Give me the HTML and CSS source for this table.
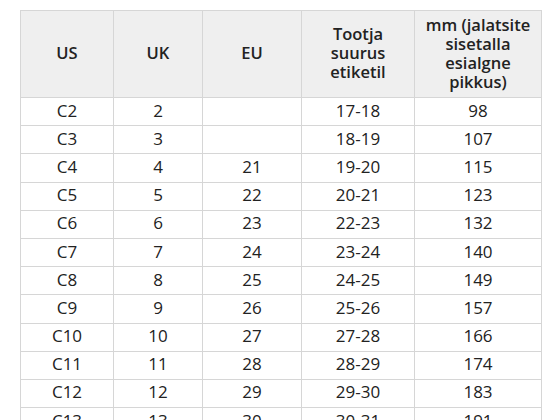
FILE: index.html
```html
<!DOCTYPE html>
<html>
<head>
<meta charset="utf-8">
<link rel="stylesheet" href="styles.css">
</head>
<body>
<table class="sizes">
  <colgroup>
    <col class="c1"><col class="c2"><col class="c3"><col class="c4"><col class="c5">
  </colgroup>
  <thead>
    <tr>
      <th>US</th>
      <th>UK</th>
      <th>EU</th>
      <th>Tootja<br>suurus<br>etiketil</th>
      <th>mm (jalatsite<br>sisetalla<br>esialgne<br>pikkus)</th>
    </tr>
  </thead>
  <tbody>
    <tr><td>C2</td><td>2</td><td></td><td>17-18</td><td>98</td></tr>
    <tr><td>C3</td><td>3</td><td></td><td>18-19</td><td>107</td></tr>
    <tr><td>C4</td><td>4</td><td>21</td><td>19-20</td><td>115</td></tr>
    <tr><td>C5</td><td>5</td><td>22</td><td>20-21</td><td>123</td></tr>
    <tr><td>C6</td><td>6</td><td>23</td><td>22-23</td><td>132</td></tr>
    <tr><td>C7</td><td>7</td><td>24</td><td>23-24</td><td>140</td></tr>
    <tr><td>C8</td><td>8</td><td>25</td><td>24-25</td><td>149</td></tr>
    <tr><td>C9</td><td>9</td><td>26</td><td>25-26</td><td>157</td></tr>
    <tr><td>C10</td><td>10</td><td>27</td><td>27-28</td><td>166</td></tr>
    <tr><td>C11</td><td>11</td><td>28</td><td>28-29</td><td>174</td></tr>
    <tr><td>C12</td><td>12</td><td>29</td><td>29-30</td><td>183</td></tr>
    <tr><td>C13</td><td>13</td><td>30</td><td>30-31</td><td>191</td></tr>
  </tbody>
</table>
</body>
</html>
```
FILE: styles.css
```css
html, body {
  margin: 0;
  padding: 0;
  background: #ffffff;
}
body {
  padding: 10px 0 0 20px;
  font-family: "Open Sans", "Liberation Sans", sans-serif;
  color: #222222;
}
.sizes {
  border-collapse: collapse;
  table-layout: fixed;
  width: 521px;
}
.c1 { width: 93px; }
.c2 { width: 89px; }
.c3 { width: 99px; }
.c4 { width: 113px; }
.c5 { width: 127px; }
.sizes th,
.sizes td {
  border: 1px solid #d6d6d6;
  text-align: center;
  vertical-align: middle;
  padding: 0;
}
.sizes th {
  background: #efefef;
  font-weight: 600;
  font-size: 16.5px;
  line-height: 19px;
  height: 83px;
  padding-bottom: 3px;
}
.sizes td {
  font-size: 17px;
  line-height: 20px;
  height: 25.2px;
  padding-bottom: 2px;
}
```
